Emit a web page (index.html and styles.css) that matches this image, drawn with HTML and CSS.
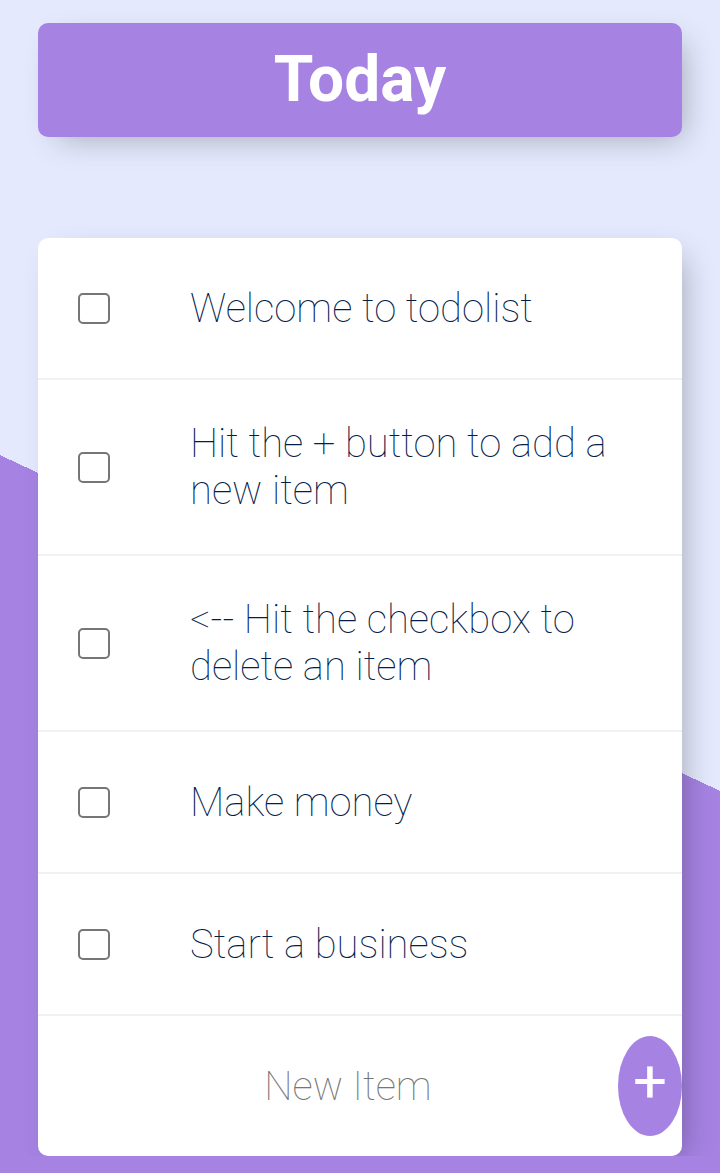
FILE: index.html
```html
<!DOCTYPE html>
<html lang="en">
<head>
<meta charset="utf-8">
<title>To-Do List</title>
<link rel="stylesheet" href="styles.css">
</head>
<body>
  <div class="page">
    <div class="box heading">
      <h1 class="title">Today</h1>
    </div>

    <div class="box list">
      <div class="item">
        <input class="check" type="checkbox">
        <p class="text">Welcome to todolist</p>
      </div>
      <div class="item">
        <input class="check" type="checkbox">
        <p class="text">Hit the + button to add a new item</p>
      </div>
      <div class="item">
        <input class="check" type="checkbox">
        <p class="text">&lt;-- Hit the checkbox to delete an item</p>
      </div>
      <div class="item">
        <input class="check" type="checkbox">
        <p class="text">Make money</p>
      </div>
      <div class="item">
        <input class="check" type="checkbox">
        <p class="text">Start a business</p>
      </div>
      <form class="item new-form">
        <input class="new-input" type="text" name="newItem" placeholder="New Item" autocomplete="off">
        <button class="add-btn" type="submit" name="list" value="Today"><span class="plus">+</span></button>
      </form>
    </div>
  </div>
</body>
</html>
```

FILE: styles.css
```css
html {
  min-height: 1246px;
  background-color: #E4E9FD;
  background-image: linear-gradient(25deg, #A683E3 50%, #E4E9FD 50%);
  font-family: Roboto, "Liberation Sans", sans-serif;
}

body {
  margin: 0;
}

.page {
  padding: 23px 38px 0;
}

.box {
  background: #ffffff;
  border-radius: 10px;
  box-shadow: 10px 10px 30px -10px rgba(0, 0, 0, 0.3);
}

.heading {
  background-color: #A683E3;
  text-align: center;
}

.title {
  margin: 0;
  padding: 20px;
  color: #ffffff;
  font-size: 64px;
  line-height: 74px;
  font-weight: 700;
}

.list {
  margin-top: 101px;
}

.item {
  min-height: 140px;
  display: flex;
  align-items: center;
  border-bottom: 2px solid #F1F1F1;
}

.item:last-child {
  border-bottom: 0;
}

.check {
  appearance: none;
  -webkit-appearance: none;
  flex: none;
  width: 32px;
  height: 31px;
  margin: 0 40px;
  border: 2px solid #767676;
  border-radius: 5px;
  background: #ffffff;
  box-sizing: border-box;
}

.text {
  margin: 0;
  padding: 40px;
  font-size: 40px;
  font-weight: 100;
  color: #00204a;
}

.new-form {
  margin: 0;
  padding-left: 40px;
}

.new-input {
  flex: 1;
  min-width: 0;
  height: 120px;
  padding: 0;
  border: none;
  background: transparent;
  text-align: center;
  font-family: Roboto, "Liberation Sans", sans-serif;
  font-size: 40px;
  font-weight: 100;
  color: #00204a;
  outline: none;
}

.new-input::placeholder {
  color: #757575;
  opacity: 1;
}

.add-btn {
  flex: none;
  width: 64px;
  height: 100px;
  padding: 0 0 8px;
  border: 0;
  border-radius: 50%;
  background-color: #A683E3;
  color: #ffffff;
  font-family: Roboto, "Liberation Sans", sans-serif;
  font-size: 60px;
  font-weight: 400;
  line-height: 1;
  display: flex;
  align-items: center;
  justify-content: center;
}
```
